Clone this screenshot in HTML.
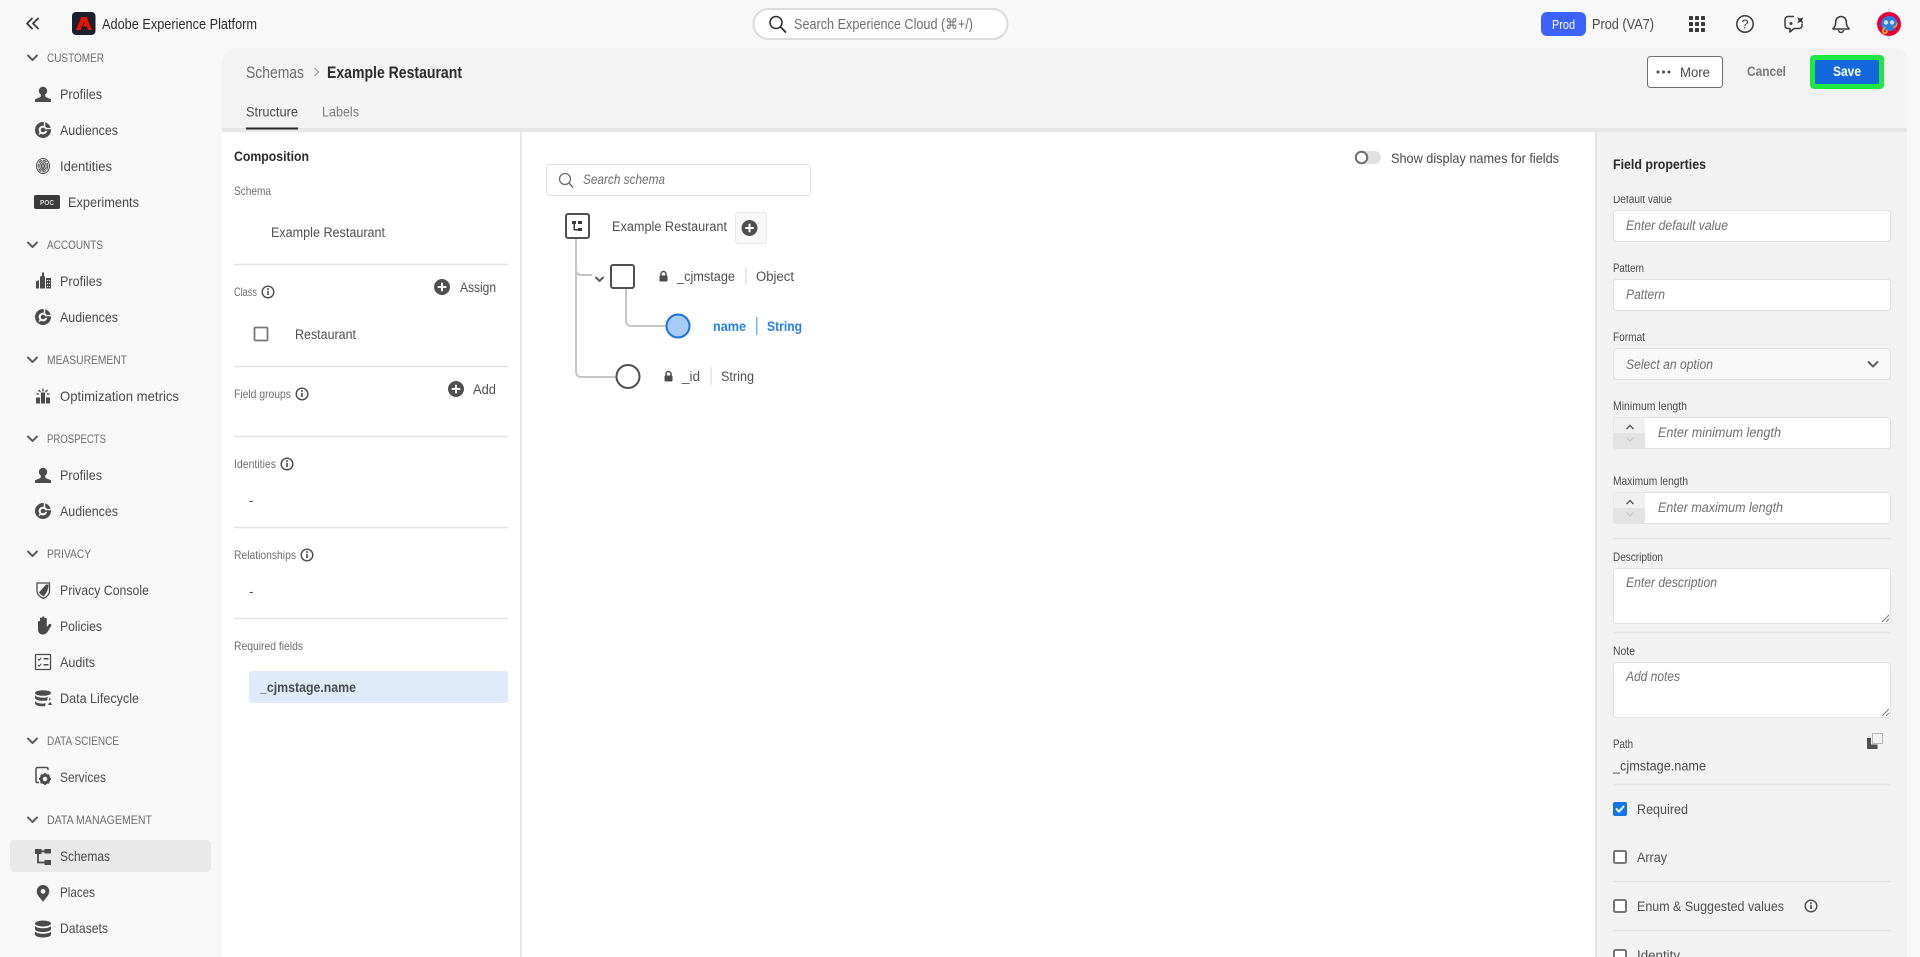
<!DOCTYPE html>
<html lang="en">
<head>
<meta charset="utf-8">
<title>Adobe Experience Platform - Schemas</title>
<style>
html,body{margin:0;padding:0;width:1920px;height:957px;overflow:hidden;background:#f8f8f8}
svg{display:block;font-family:"Liberation Sans",Arial,sans-serif;filter:blur(.3px)}
.sec{font-size:11.5px;fill:#6e6e6e}
.nav{font-size:14px;fill:#4b4b4b}
.lbl{font-size:12px;fill:#6e6e6e}
.flbl{font-size:12px;fill:#4b4b4b}
.txt{font-size:13.5px;fill:#505050}
.ph{font-size:13.5px;fill:#707070;font-style:italic}
.b{font-weight:bold}
.ln{fill:none;stroke:#c6c6c6;stroke-width:2}
.hr{stroke:#e3e3e3;stroke-width:1.5}
.inp{fill:#fff;stroke:#e1e1e1;stroke-width:1}
.ic{fill:#4b4b4b}
.chev{fill:none;stroke:#5e5e5e;stroke-width:2;stroke-linecap:round;stroke-linejoin:round}
</style>
</head>
<body>
<svg width="1920" height="957" viewBox="0 0 1920 957" xmlns="http://www.w3.org/2000/svg">
<defs>
<g id="person"><circle cx="8" cy="5" r="4.2"/><path d="M6 8.5h4l.5 2.5 5.5 2.2V16H0v-2.8L5.5 11z"/></g>
<g id="aud"><circle cx="8" cy="8" r="6.200" fill="none" stroke="#4b4b4b" stroke-width="3.600"/><path d="M9.500 0V4.200M11.500 6.600H16.500M4 12.500l2-2" stroke="#f8f8f8" stroke-width="1.400" fill="none"/><circle cx="8" cy="8" r="2.300" fill="#4b4b4b"/><rect x="9" y="7.300" width="4.500" height="1.600" fill="#4b4b4b"/></g>
<g id="info"><circle cx="0" cy="0" r="5.8" fill="none" stroke="#4b4b4b" stroke-width="1.4"/><rect x="-.8" y="-1.2" width="1.6" height="4.2" fill="#4b4b4b"/><circle cx="0" cy="-3" r=".95" fill="#4b4b4b"/></g>
<g id="plus"><circle cx="0" cy="0" r="8" fill="#505050"/><path d="M-4.300 0H4.300M0-4.300V4.300" stroke="#fff" stroke-width="2"/></g>
<g id="lock"><rect x="-4" y="-1.500" width="8" height="6" rx="1" fill="#4b4b4b"/><path d="M-2.500-1.500V-3a2.500 2.500 0 0 1 5 0v1.500" fill="none" stroke="#4b4b4b" stroke-width="1.500"/></g>
</defs>

<!-- global bar and sidebar -->
<rect width="1920" height="957" fill="#f8f8f8"/>
<path d="M32 18.500l-5 5 5 5M38 18.500l-5 5 5 5" fill="none" stroke="#3a3a3a" stroke-width="1.800" stroke-linecap="round" stroke-linejoin="round"/>
<rect x="72" y="12" width="23.500" height="23" rx="4" fill="#1b1f2e"/>
<path d="M81.500 17h5L92 30h-3.800l-1.400-3.400h-3.600L84.600 23l-.6-1.500-3.400 8.500H76z" fill="#eb1000"/>
<text x="102" y="29" font-size="15" fill="#2c2c2c" textLength="155" lengthAdjust="spacingAndGlyphs">Adobe Experience Platform</text>

<rect x="753.500" y="9" width="254" height="30" rx="15" fill="#fff" stroke="#dadada" stroke-width="2"/>
<circle cx="776" cy="22.500" r="6" fill="none" stroke="#2c2c2c" stroke-width="1.500"/><path d="M780.500 27l5 5" stroke="#2c2c2c" stroke-width="1.800" stroke-linecap="round"/>
<text x="794" y="29" font-size="14.500" fill="#6e6e6e" textLength="179" lengthAdjust="spacingAndGlyphs">Search Experience Cloud (⌘+/)</text>

<rect x="1541" y="12" width="45" height="24" rx="6" fill="#3b63fb"/>
<text x="1552" y="29" font-size="13" fill="#fff" textLength="23" lengthAdjust="spacingAndGlyphs">Prod</text>
<text x="1592" y="29" font-size="14.500" fill="#4b4b4b" textLength="62" lengthAdjust="spacingAndGlyphs">Prod (VA7)</text>
<g fill="#3a3a3a">
<rect x="1689" y="16" width="4" height="4" rx=".8"/><rect x="1695" y="16" width="4" height="4" rx=".8"/><rect x="1701" y="16" width="4" height="4" rx=".8"/>
<rect x="1689" y="22" width="4" height="4" rx=".8"/><rect x="1695" y="22" width="4" height="4" rx=".8"/><rect x="1701" y="22" width="4" height="4" rx=".8"/>
<rect x="1689" y="28" width="4" height="4" rx=".8"/><rect x="1695" y="28" width="4" height="4" rx=".8"/><rect x="1701" y="28" width="4" height="4" rx=".8"/>
</g>
<circle cx="1745" cy="24" r="8.200" fill="none" stroke="#3a3a3a" stroke-width="1.500"/>
<text x="1741.500" y="28.500" font-size="12.500" fill="#3a3a3a">?</text>
<path d="M1794 16.500h-6a3 3 0 0 0-3 3v6a3 3 0 0 0 3 3h2v3.500l4-3.500h5a3 3 0 0 0 3-3v-2" fill="none" stroke="#3a3a3a" stroke-width="1.500" stroke-linejoin="round"/>
<circle cx="1791" cy="23.500" r="1.500" fill="#3a3a3a"/>
<path d="M1799 15.500l1.300 3 3-1.300-1.300 3 1.300 3-3-1.300-3 1.300 1.300-3-1.300-3 3 1.300z" fill="#3a3a3a"/>
<path d="M1841 16.500a5.300 5.300 0 0 0-5.300 5.300c0 4-1.200 5.200-2.700 6.700v.5h16v-.5c-1.500-1.500-2.700-2.700-2.700-6.700a5.300 5.300 0 0 0-5.300-5.300z" fill="none" stroke="#3a3a3a" stroke-width="1.500" stroke-linejoin="round"/>
<path d="M1838.500 30a2.500 2.500 0 0 0 5 0" fill="none" stroke="#3a3a3a" stroke-width="1.500"/>
<circle cx="1889" cy="24" r="12" fill="#e4003a"/>
<path d="M1881 24a8 8 0 0 1 8-8c6 0 9 4 8 9-1 4-4 6-8 6-5 0-8-3-8-7z" fill="#2a7de1"/>
<circle cx="1886" cy="22.500" r="2.200" fill="#cfe3fb"/><circle cx="1892" cy="22.500" r="2.200" fill="#cfe3fb"/>
<path d="M1885 27c-2 2-3 5-1 6s4-1 2-3" fill="none" stroke="#f5b800" stroke-width="1.600"/>
<path d="M1893 27c3 0 4-1 4-4" fill="none" stroke="#f5b800" stroke-width="1.200"/>

<!-- nav -->
<g class="chev">
<path d="M28 55.500l4.500 4.500 4.500-4.500M28 242.500l4.500 4.500 4.500-4.500M28 357.500l4.500 4.500 4.500-4.500M28 436.500l4.500 4.500 4.500-4.500M28 551.500l4.500 4.500 4.500-4.500M28 738.500l4.500 4.500 4.500-4.500M28 817.500l4.500 4.500 4.500-4.500"/>
</g>
<text class="sec" x="47" y="62" textLength="57" lengthAdjust="spacingAndGlyphs">CUSTOMER</text>
<text class="sec" x="47" y="249" textLength="56" lengthAdjust="spacingAndGlyphs">ACCOUNTS</text>
<text class="sec" x="47" y="364" textLength="80" lengthAdjust="spacingAndGlyphs">MEASUREMENT</text>
<text class="sec" x="47" y="443" textLength="59" lengthAdjust="spacingAndGlyphs">PROSPECTS</text>
<text class="sec" x="47" y="558" textLength="44" lengthAdjust="spacingAndGlyphs">PRIVACY</text>
<text class="sec" x="47" y="745" textLength="72" lengthAdjust="spacingAndGlyphs">DATA SCIENCE</text>
<text class="sec" x="47" y="824" textLength="105" lengthAdjust="spacingAndGlyphs">DATA MANAGEMENT</text>

<rect x="10" y="840" width="201" height="32" rx="4" fill="#e9e9e9"/>

<text class="nav" x="60" y="99" textLength="42" lengthAdjust="spacingAndGlyphs">Profiles</text>
<text class="nav" x="60" y="135" textLength="58" lengthAdjust="spacingAndGlyphs">Audiences</text>
<text class="nav" x="60" y="171" textLength="52" lengthAdjust="spacingAndGlyphs">Identities</text>
<text class="nav" x="68" y="207" textLength="71" lengthAdjust="spacingAndGlyphs">Experiments</text>
<text class="nav" x="60" y="286" textLength="42" lengthAdjust="spacingAndGlyphs">Profiles</text>
<text class="nav" x="60" y="322" textLength="58" lengthAdjust="spacingAndGlyphs">Audiences</text>
<text class="nav" x="60" y="401" textLength="119" lengthAdjust="spacingAndGlyphs">Optimization metrics</text>
<text class="nav" x="60" y="480" textLength="42" lengthAdjust="spacingAndGlyphs">Profiles</text>
<text class="nav" x="60" y="516" textLength="58" lengthAdjust="spacingAndGlyphs">Audiences</text>
<text class="nav" x="60" y="595" textLength="89" lengthAdjust="spacingAndGlyphs">Privacy Console</text>
<text class="nav" x="60" y="631" textLength="42" lengthAdjust="spacingAndGlyphs">Policies</text>
<text class="nav" x="60" y="667" textLength="35" lengthAdjust="spacingAndGlyphs">Audits</text>
<text class="nav" x="60" y="703" textLength="79" lengthAdjust="spacingAndGlyphs">Data Lifecycle</text>
<text class="nav" x="60" y="782" textLength="46" lengthAdjust="spacingAndGlyphs">Services</text>
<text class="nav" x="60" y="861" textLength="50" lengthAdjust="spacingAndGlyphs">Schemas</text>
<text class="nav" x="60" y="897" textLength="35" lengthAdjust="spacingAndGlyphs">Places</text>
<text class="nav" x="60" y="933" textLength="48" lengthAdjust="spacingAndGlyphs">Datasets</text>

<!-- nav icons -->
<g class="ic">
<use href="#person" x="35" y="86"/>
<use href="#aud" x="35" y="122"/>
<g fill="none" stroke="#4b4b4b" stroke-width="1" transform="translate(43 166)">
<ellipse rx="6.500" ry="7.500"/><ellipse rx="4.800" ry="5.800" stroke-dasharray="4 1"/><ellipse rx="3.200" ry="4.200"/><ellipse rx="1.600" ry="2.500"/><path d="M0-2V4"/>
</g>
<rect x="34" y="195" width="26" height="14" rx="2" fill="#3a3a3a"/>
<text x="40" y="205" font-size="7.500" font-weight="bold" fill="#d8d8d8" textLength="14" lengthAdjust="spacingAndGlyphs">POC</text>
<path fill-rule="evenodd" d="M36 288.500v-7l3-1.500v8.500zM40 288.500v-12l2-.5v-3.500h2v3.500l1 .5v12zM46 278h5v10.500h-5zM47 280v1h1v-1zM49 280v1h1v-1zM47 283v1h1v-1zM49 283v1h1v-1zM47 286v1h1v-1zM49 286v1h1v-1z"/>
<use href="#aud" x="35" y="309"/>
<path d="M36 397.500h4v6h-4zM41 392.500h4v11h-4zM46 397.500h4v6h-4z"/>
<path d="M43 388.500v3M38.500 390l2 2M47.500 390l-2 2M36.500 394h2.500M49.500 394H47" stroke="#4b4b4b" stroke-width="1.300" fill="none"/>
<use href="#person" x="35" y="467"/>
<use href="#aud" x="35" y="503"/>
<path d="M38.500 584.500h10c0 6-3 10-5 12-2-1.500-5-3-5-6z" fill="#4b4b4b"/>
<path d="M37.500 583.500l9.500 0-9 10z" fill="#f8f8f8"/>
<path d="M37 583h12.500v8c0 3.500-3 6-6.200 7.500-3.100-1.500-6.300-4-6.300-7.500z" fill="none" stroke="#4b4b4b" stroke-width="1.300"/>
<path d="M38 627v-5c0-1.500 2-1.500 2 0v-3.500c0-1.500 2.200-1.500 2.200 0v-1c0-1.500 2.300-1.500 2.300 0v1.500c0-1.500 2.300-1.500 2.300 0v8l2-2.500c1.500-1.500 3.400 0 2.300 1.500l-3.300 5.500c-1.200 2-3 3-5 3-3 0-4.800-2-4.800-5z"/>
<rect x="35.500" y="654.500" width="15" height="15" fill="#f8f8f8" stroke="#4b4b4b" stroke-width="1.300" rx=".5"/>
<path d="M38 659l1.200 1.200 2-2.500M38 665l1.200 1.200 2-2.500" fill="none" stroke="#4b4b4b" stroke-width="1"/>
<rect x="43.500" y="658" width="5" height="1.500"/><rect x="43.500" y="664" width="5" height="1.500"/>
<ellipse cx="43" cy="693" rx="8" ry="2.800"/>
<path d="M35 695v3c0 1.500 3.500 2.800 8 2.800 1.500 0 2.800-.1 4-.4l1-3.400c-1.300.5-3 .7-5 .7-4.500 0-8-1.200-8-2.700zM35 700.500v3c0 1.500 3.500 2.800 8 2.800l2-.1.800-2.800c-.9.1-1.800.2-2.800.2-4.500 0-8-1.200-8-3.100z"/>
<path d="M47.500 696l2 2-.8 3 2.300-2M48 705h4l-1.500-3-1.500 1z"/>
<path d="M36 781v-12a1.500 1.500 0 0 1 1.500-1.500h9a1.500 1.500 0 0 1 1.500 1.500v1M36 781c0 1 .5 1.500 1.500 1.500H39" fill="none" stroke="#4b4b4b" stroke-width="1.500"/>
<circle cx="45" cy="779" r="3.800" fill="none" stroke="#4b4b4b" stroke-width="3"/>
<path d="M45 773v2M45 783v2M39 779h2M49 779h2M40.800 774.800l1.400 1.400M49.200 783.200l-1.400-1.400M49.200 774.800l-1.400 1.400M40.800 783.200l1.400-1.400" stroke="#4b4b4b" stroke-width="1.800"/>
<rect x="35" y="849" width="6.500" height="5"/><rect x="44.500" y="849" width="6.500" height="4.500"/><rect x="44.500" y="860" width="6.500" height="5"/>
<path d="M38 852V862.500H45M40 851.300H45" fill="none" stroke="#4b4b4b" stroke-width="1.800"/>
<path fill-rule="evenodd" d="M43 885a6.300 6.300 0 0 0-6.300 6.300c0 4 4 7 6.300 10.700 2.300-3.700 6.300-6.700 6.300-10.700A6.300 6.300 0 0 0 43 885zM43 889a2.400 2.400 0 1 1 0 4.800 2.400 2.400 0 0 1 0-4.800z"/>
<ellipse cx="43" cy="923.500" rx="8" ry="3"/>
<path d="M35 926v3c0 1.700 3.600 3 8 3s8-1.300 8-3v-3c-1.300 1.500-4.500 2.300-8 2.300s-6.700-.8-8-2.300zM35 931.500v3c0 1.700 3.600 3 8 3s8-1.300 8-3v-3c-1.300 1.500-4.500 2.300-8 2.300s-6.700-.8-8-2.300z"/>
</g>

<!-- main panel -->
<path d="M222 957V64a16 16 0 0 1 16-16H1895a12 12 0 0 1 12 12V957z" fill="#f3f3f3"/>
<rect x="222" y="128" width="1685" height="4" fill="#e6e6e6"/>
<rect x="222" y="132" width="1373" height="825" fill="#fff"/>
<rect x="520" y="132" width="2" height="825" fill="#e8e8e8"/>
<rect x="1595" y="132" width="2" height="825" fill="#e3e3e3"/>
<rect x="1597" y="132" width="310" height="825" fill="#f2f2f2"/>

<text x="246" y="78" font-size="16.500" fill="#6e6e6e" textLength="58" lengthAdjust="spacingAndGlyphs">Schemas</text>
<path d="M314.500 68l4 4-4 4" fill="none" stroke="#a8a8a8" stroke-width="1.300"/>
<text x="327" y="78" font-size="16.500" font-weight="bold" fill="#2c2c2c" textLength="135" lengthAdjust="spacingAndGlyphs">Example Restaurant</text>
<text x="246" y="116.500" font-size="14" fill="#4b4b4b" textLength="52" lengthAdjust="spacingAndGlyphs">Structure</text>
<text x="322" y="116.500" font-size="14" fill="#7a7a7a" textLength="37" lengthAdjust="spacingAndGlyphs">Labels</text>
<rect x="246" y="127.500" width="52" height="2" fill="#2c2c2c"/>

<rect x="1647.500" y="56.500" width="75" height="31" rx="3" fill="#fff" stroke="#6e6e6e" stroke-width="1"/>
<circle cx="1658" cy="72" r="1.500" fill="#4b4b4b"/><circle cx="1663.500" cy="72" r="1.500" fill="#4b4b4b"/><circle cx="1669" cy="72" r="1.500" fill="#4b4b4b"/>
<text x="1680" y="77" font-size="14" fill="#4b4b4b" textLength="30" lengthAdjust="spacingAndGlyphs">More</text>
<text x="1747" y="76" font-size="14" font-weight="bold" fill="#7a7a7a" textLength="39" lengthAdjust="spacingAndGlyphs">Cancel</text>
<rect x="1810" y="55" width="74" height="34" rx="4" fill="#1ee745"/>
<rect x="1815" y="60" width="64" height="24" rx="1.500" fill="#1268dc"/>
<text x="1833" y="76" font-size="13.500" font-weight="bold" fill="#fff" textLength="28" lengthAdjust="spacingAndGlyphs">Save</text>

<!-- composition -->
<text x="234" y="161" font-size="14" font-weight="bold" fill="#2c2c2c" textLength="75" lengthAdjust="spacingAndGlyphs">Composition</text>
<text class="lbl" x="234" y="195" textLength="37" lengthAdjust="spacingAndGlyphs">Schema</text>
<text class="txt" x="271" y="237" textLength="114" lengthAdjust="spacingAndGlyphs">Example Restaurant</text>
<path class="hr" d="M234 264.500H508M234 366.500H508M234 436.500H508M234 527.500H508M234 618.500H508"/>
<text class="lbl" x="234" y="296" textLength="23" lengthAdjust="spacingAndGlyphs">Class</text>
<use href="#info" x="268" y="292"/>
<use href="#plus" x="442" y="287"/>
<text class="txt" x="460" y="292" textLength="36" lengthAdjust="spacingAndGlyphs">Assign</text>
<rect x="254.500" y="327.500" width="13" height="13" rx="1" fill="#fff" stroke="#777" stroke-width="1.800"/>
<text class="txt" x="295" y="339" textLength="61" lengthAdjust="spacingAndGlyphs">Restaurant</text>
<text class="lbl" x="234" y="398" textLength="57" lengthAdjust="spacingAndGlyphs">Field groups</text>
<use href="#info" x="302" y="394"/>
<use href="#plus" x="456" y="389"/>
<text class="txt" x="473" y="394" textLength="23" lengthAdjust="spacingAndGlyphs">Add</text>
<text class="lbl" x="234" y="468" textLength="42" lengthAdjust="spacingAndGlyphs">Identities</text>
<use href="#info" x="287" y="464"/>
<text class="txt" x="249" y="505" textLength="4.500" lengthAdjust="spacingAndGlyphs">-</text>
<text class="lbl" x="234" y="559" textLength="62" lengthAdjust="spacingAndGlyphs">Relationships</text>
<use href="#info" x="307" y="555"/>
<text class="txt" x="249" y="596" textLength="4.500" lengthAdjust="spacingAndGlyphs">-</text>
<text class="lbl" x="234" y="650" textLength="69" lengthAdjust="spacingAndGlyphs">Required fields</text>
<rect x="249" y="671" width="259" height="32" rx="3" fill="#dfebfa"/>
<text x="260" y="692" font-size="13.500" font-weight="bold" fill="#4b4b4b" textLength="96" lengthAdjust="spacingAndGlyphs">_cjmstage.name</text>

<!-- schema tree -->
<rect x="546.500" y="164.500" width="264" height="31" rx="3" fill="#fff" stroke="#e1e1e1"/>
<circle cx="565" cy="179" r="5.500" fill="none" stroke="#6e6e6e" stroke-width="1.300"/><path d="M569 183l4 4.500" stroke="#6e6e6e" stroke-width="1.500"/>
<text class="ph" x="583" y="184" textLength="82" lengthAdjust="spacingAndGlyphs">Search schema</text>
<path class="ln" d="M576 238V270a5 5 0 0 0 5 5h11"/>
<path class="ln" d="M576 270V372a5 5 0 0 0 5 5h36"/>
<path class="ln" d="M626 288V321a5 5 0 0 0 5 5h36"/>
<rect x="566" y="214" width="23" height="24" rx="2" fill="#fff" stroke="#505050" stroke-width="2"/>
<g fill="#3a3a3a"><rect x="572" y="221" width="4" height="3"/><rect x="578" y="221" width="4" height="3"/><rect x="578" y="228" width="4" height="3"/><path d="M573.500 224h1.500v5h3v1.500h-4.500z"/></g>
<text class="txt" x="612" y="231" textLength="115" lengthAdjust="spacingAndGlyphs">Example Restaurant</text>
<rect x="735.500" y="212.500" width="31" height="31" rx="3" fill="#f8f8f8" stroke="#e6e6e6"/>
<use href="#plus" x="749.500" y="228"/>
<path class="chev" d="M596 277.500l3.500 3.500 3.500-3.500" stroke-width="1.700"/>
<rect x="611" y="265" width="23" height="23" rx="2" fill="#fff" stroke="#505050" stroke-width="2"/>
<use href="#lock" x="663.500" y="277"/>
<text class="txt" x="677" y="281" textLength="58" lengthAdjust="spacingAndGlyphs">_cjmstage</text>
<rect x="745.500" y="267" width="1" height="18" fill="#d4d4d4"/>
<text class="txt" x="756" y="281" textLength="38" lengthAdjust="spacingAndGlyphs">Object</text>
<circle cx="678" cy="326" r="11.500" fill="#a9ccf5" stroke="#1473e6" stroke-width="2"/>
<text x="713" y="331" font-size="13.500" font-weight="bold" fill="#2680eb" textLength="33" lengthAdjust="spacingAndGlyphs">name</text>
<rect x="756" y="317" width="1.500" height="18" fill="#7eb2ee"/>
<text x="767" y="331" font-size="13.500" font-weight="bold" fill="#2680eb" textLength="35" lengthAdjust="spacingAndGlyphs">String</text>
<circle cx="628" cy="376.500" r="11.500" fill="#fff" stroke="#505050" stroke-width="2"/>
<use href="#lock" x="668.500" y="377"/>
<text class="txt" x="682" y="381" textLength="18" lengthAdjust="spacingAndGlyphs">_id</text>
<rect x="710.500" y="367" width="1" height="18" fill="#d4d4d4"/>
<text class="txt" x="721" y="381" textLength="33" lengthAdjust="spacingAndGlyphs">String</text>
<rect x="1355" y="151" width="26" height="13" rx="6.500" fill="#e1e1e1"/>
<circle cx="1361.500" cy="157.500" r="5.700" fill="#fff" stroke="#6e6e6e" stroke-width="2"/>
<text x="1391" y="163" font-size="14" fill="#4b4b4b" textLength="168" lengthAdjust="spacingAndGlyphs">Show display names for fields</text>

<!-- field properties -->
<text x="1613" y="169" font-size="14" font-weight="bold" fill="#2c2c2c" textLength="93" lengthAdjust="spacingAndGlyphs">Field properties</text>
<text class="flbl" x="1613" y="203" textLength="59" lengthAdjust="spacingAndGlyphs">Default value</text>
<rect x="1597" y="180" width="310" height="16" fill="#f2f2f2"/>
<rect class="inp" x="1613.500" y="210.500" width="277" height="31" rx="3"/>
<text class="ph" x="1626" y="230" textLength="102" lengthAdjust="spacingAndGlyphs">Enter default value</text>
<text class="flbl" x="1613" y="272" textLength="31" lengthAdjust="spacingAndGlyphs">Pattern</text>
<rect class="inp" x="1613.500" y="279.500" width="277" height="31" rx="3"/>
<text class="ph" x="1626" y="299" textLength="39" lengthAdjust="spacingAndGlyphs">Pattern</text>
<text class="flbl" x="1613" y="341" textLength="32" lengthAdjust="spacingAndGlyphs">Format</text>
<rect x="1613.500" y="348.500" width="277" height="31" rx="3" fill="#f8f8f8" stroke="#e1e1e1"/>
<text class="ph" x="1626" y="369" textLength="87" lengthAdjust="spacingAndGlyphs">Select an option</text>
<path class="chev" d="M1868.500 362l4.500 4.500 4.500-4.500"/>
<text class="flbl" x="1613" y="410" textLength="74" lengthAdjust="spacingAndGlyphs">Minimum length</text>
<rect class="inp" x="1613.500" y="417.500" width="277" height="31" rx="3"/>
<path d="M1613.500 433V420.500a3 3 0 0 1 3-3H1645V433z" fill="#f0f0f0"/>
<path d="M1613.500 433V445.500a3 3 0 0 0 3 3H1645V433z" fill="#e3e3e3"/>
<path d="M1626.500 429l3.500-3.500 3.500 3.500" fill="none" stroke="#5e5e5e" stroke-width="1.500"/>
<path d="M1626.500 437.500l3.500 3.500 3.500-3.500" fill="none" stroke="#c6c6c6" stroke-width="1.300"/>
<text class="ph" x="1658" y="437" textLength="123" lengthAdjust="spacingAndGlyphs">Enter minimum length</text>
<text class="flbl" x="1613" y="485" textLength="75" lengthAdjust="spacingAndGlyphs">Maximum length</text>
<rect class="inp" x="1613.500" y="492.500" width="277" height="31" rx="3"/>
<path d="M1613.500 508V495.500a3 3 0 0 1 3-3H1645V508z" fill="#f0f0f0"/>
<path d="M1613.500 508V520.500a3 3 0 0 0 3 3H1645V508z" fill="#e3e3e3"/>
<path d="M1626.500 504l3.500-3.500 3.500 3.500" fill="none" stroke="#5e5e5e" stroke-width="1.500"/>
<path d="M1626.500 512.500l3.500 3.500 3.500-3.500" fill="none" stroke="#c6c6c6" stroke-width="1.300"/>
<text class="ph" x="1658" y="512" textLength="125" lengthAdjust="spacingAndGlyphs">Enter maximum length</text>
<path class="hr" d="M1613 538.500H1891M1613 632.500H1891M1613 784.500H1891M1613 881.500H1891M1613 930.500H1891"/>
<text class="flbl" x="1613" y="561" textLength="50" lengthAdjust="spacingAndGlyphs">Description</text>
<rect class="inp" x="1613.500" y="568.500" width="277" height="55" rx="3"/>
<text class="ph" x="1626" y="587" textLength="91" lengthAdjust="spacingAndGlyphs">Enter description</text>
<path d="M1882 622l7-7M1886 622l3-3" stroke="#777" stroke-width="1"/>
<text class="flbl" x="1613" y="655" textLength="22" lengthAdjust="spacingAndGlyphs">Note</text>
<rect class="inp" x="1613.500" y="662.500" width="277" height="55" rx="3"/>
<text class="ph" x="1626" y="681" textLength="54" lengthAdjust="spacingAndGlyphs">Add notes</text>
<path d="M1882 716l7-7M1886 716l3-3" stroke="#777" stroke-width="1"/>
<text class="flbl" x="1613" y="748" textLength="20" lengthAdjust="spacingAndGlyphs">Path</text>
<rect x="1872.500" y="733.500" width="10" height="10" fill="none" stroke="#777" stroke-dasharray="1 1"/>
<path d="M1867 738h4v6.500h6.500v4.500H1867z" fill="#505050"/>
<text x="1613" y="770.500" font-size="13.500" fill="#4b4b4b" textLength="93" lengthAdjust="spacingAndGlyphs">_cjmstage.name</text>
<rect x="1613" y="802" width="14" height="14" rx="2" fill="#1473e6"/>
<path d="M1616.500 809l2.500 2.700 4.500-5.200" fill="none" stroke="#fff" stroke-width="2" stroke-linecap="round" stroke-linejoin="round"/>
<text class="txt" x="1637" y="814" textLength="51" lengthAdjust="spacingAndGlyphs">Required</text>
<rect x="1614" y="851" width="12" height="12" rx="1.500" fill="#fff" stroke="#777" stroke-width="2"/>
<text class="txt" x="1637" y="862" textLength="30" lengthAdjust="spacingAndGlyphs">Array</text>
<rect x="1614" y="900" width="12" height="12" rx="1.500" fill="#fff" stroke="#777" stroke-width="2"/>
<text class="txt" x="1637" y="911" textLength="147" lengthAdjust="spacingAndGlyphs">Enum &amp; Suggested values</text>
<use href="#info" x="1811" y="906"/>
<rect x="1614" y="950" width="12" height="12" rx="1.500" fill="#fff" stroke="#777" stroke-width="2"/>
<text class="txt" x="1637" y="960" textLength="43" lengthAdjust="spacingAndGlyphs">Identity</text>
</svg>
</body>
</html>
